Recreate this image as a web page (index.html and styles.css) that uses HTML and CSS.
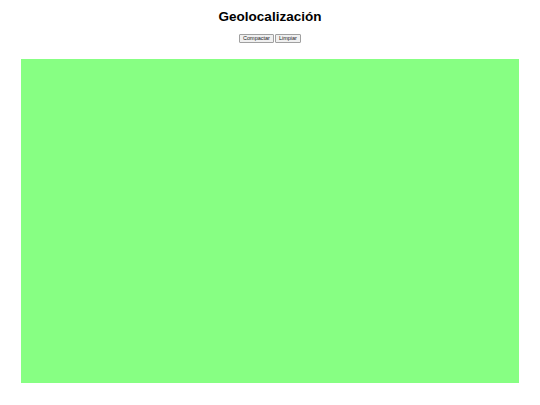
FILE: index.html
```html
<!DOCTYPE html>
<html lang="es">
<head>
<meta charset="utf-8">
<title>Geolocalización</title>
<link rel="stylesheet" href="styles.css">
</head>
<body>
<div class="page">
  <h1 class="title">Geolocalización</h1>
  <div class="controls">
    <button class="btn">Compactar</button>
    <button class="btn">Limpiar</button>
  </div>
  <div class="map"></div>
</div>
</body>
</html>
```
FILE: styles.css
```css
html, body {
  margin: 0;
  padding: 0;
  background: #ffffff;
}
.page {
  font-family: "Liberation Sans", Arial, sans-serif;
  padding: 9px 21px 0 21px;
  display: flex;
  flex-direction: column;
  align-items: center;
}
.title {
  margin: 0;
  font-size: 13.5px;
  line-height: 15px;
  font-weight: bold;
  color: #000;
}
.controls {
  margin-top: 10px;
  display: flex;
  gap: 1px;
}
.btn {
  font-family: "Liberation Sans", Arial, sans-serif;
  font-size: 5.5px;
  line-height: 7px;
  height: 9px;
  padding: 0 3px;
  margin: 0;
  border: 1px solid #a0a0a0;
  border-radius: 1px;
  background: #f0f0f0;
  color: #222;
}
.map {
  margin-top: 16px;
  width: 498px;
  height: 324px;
  background: #87ff83;
}
```
